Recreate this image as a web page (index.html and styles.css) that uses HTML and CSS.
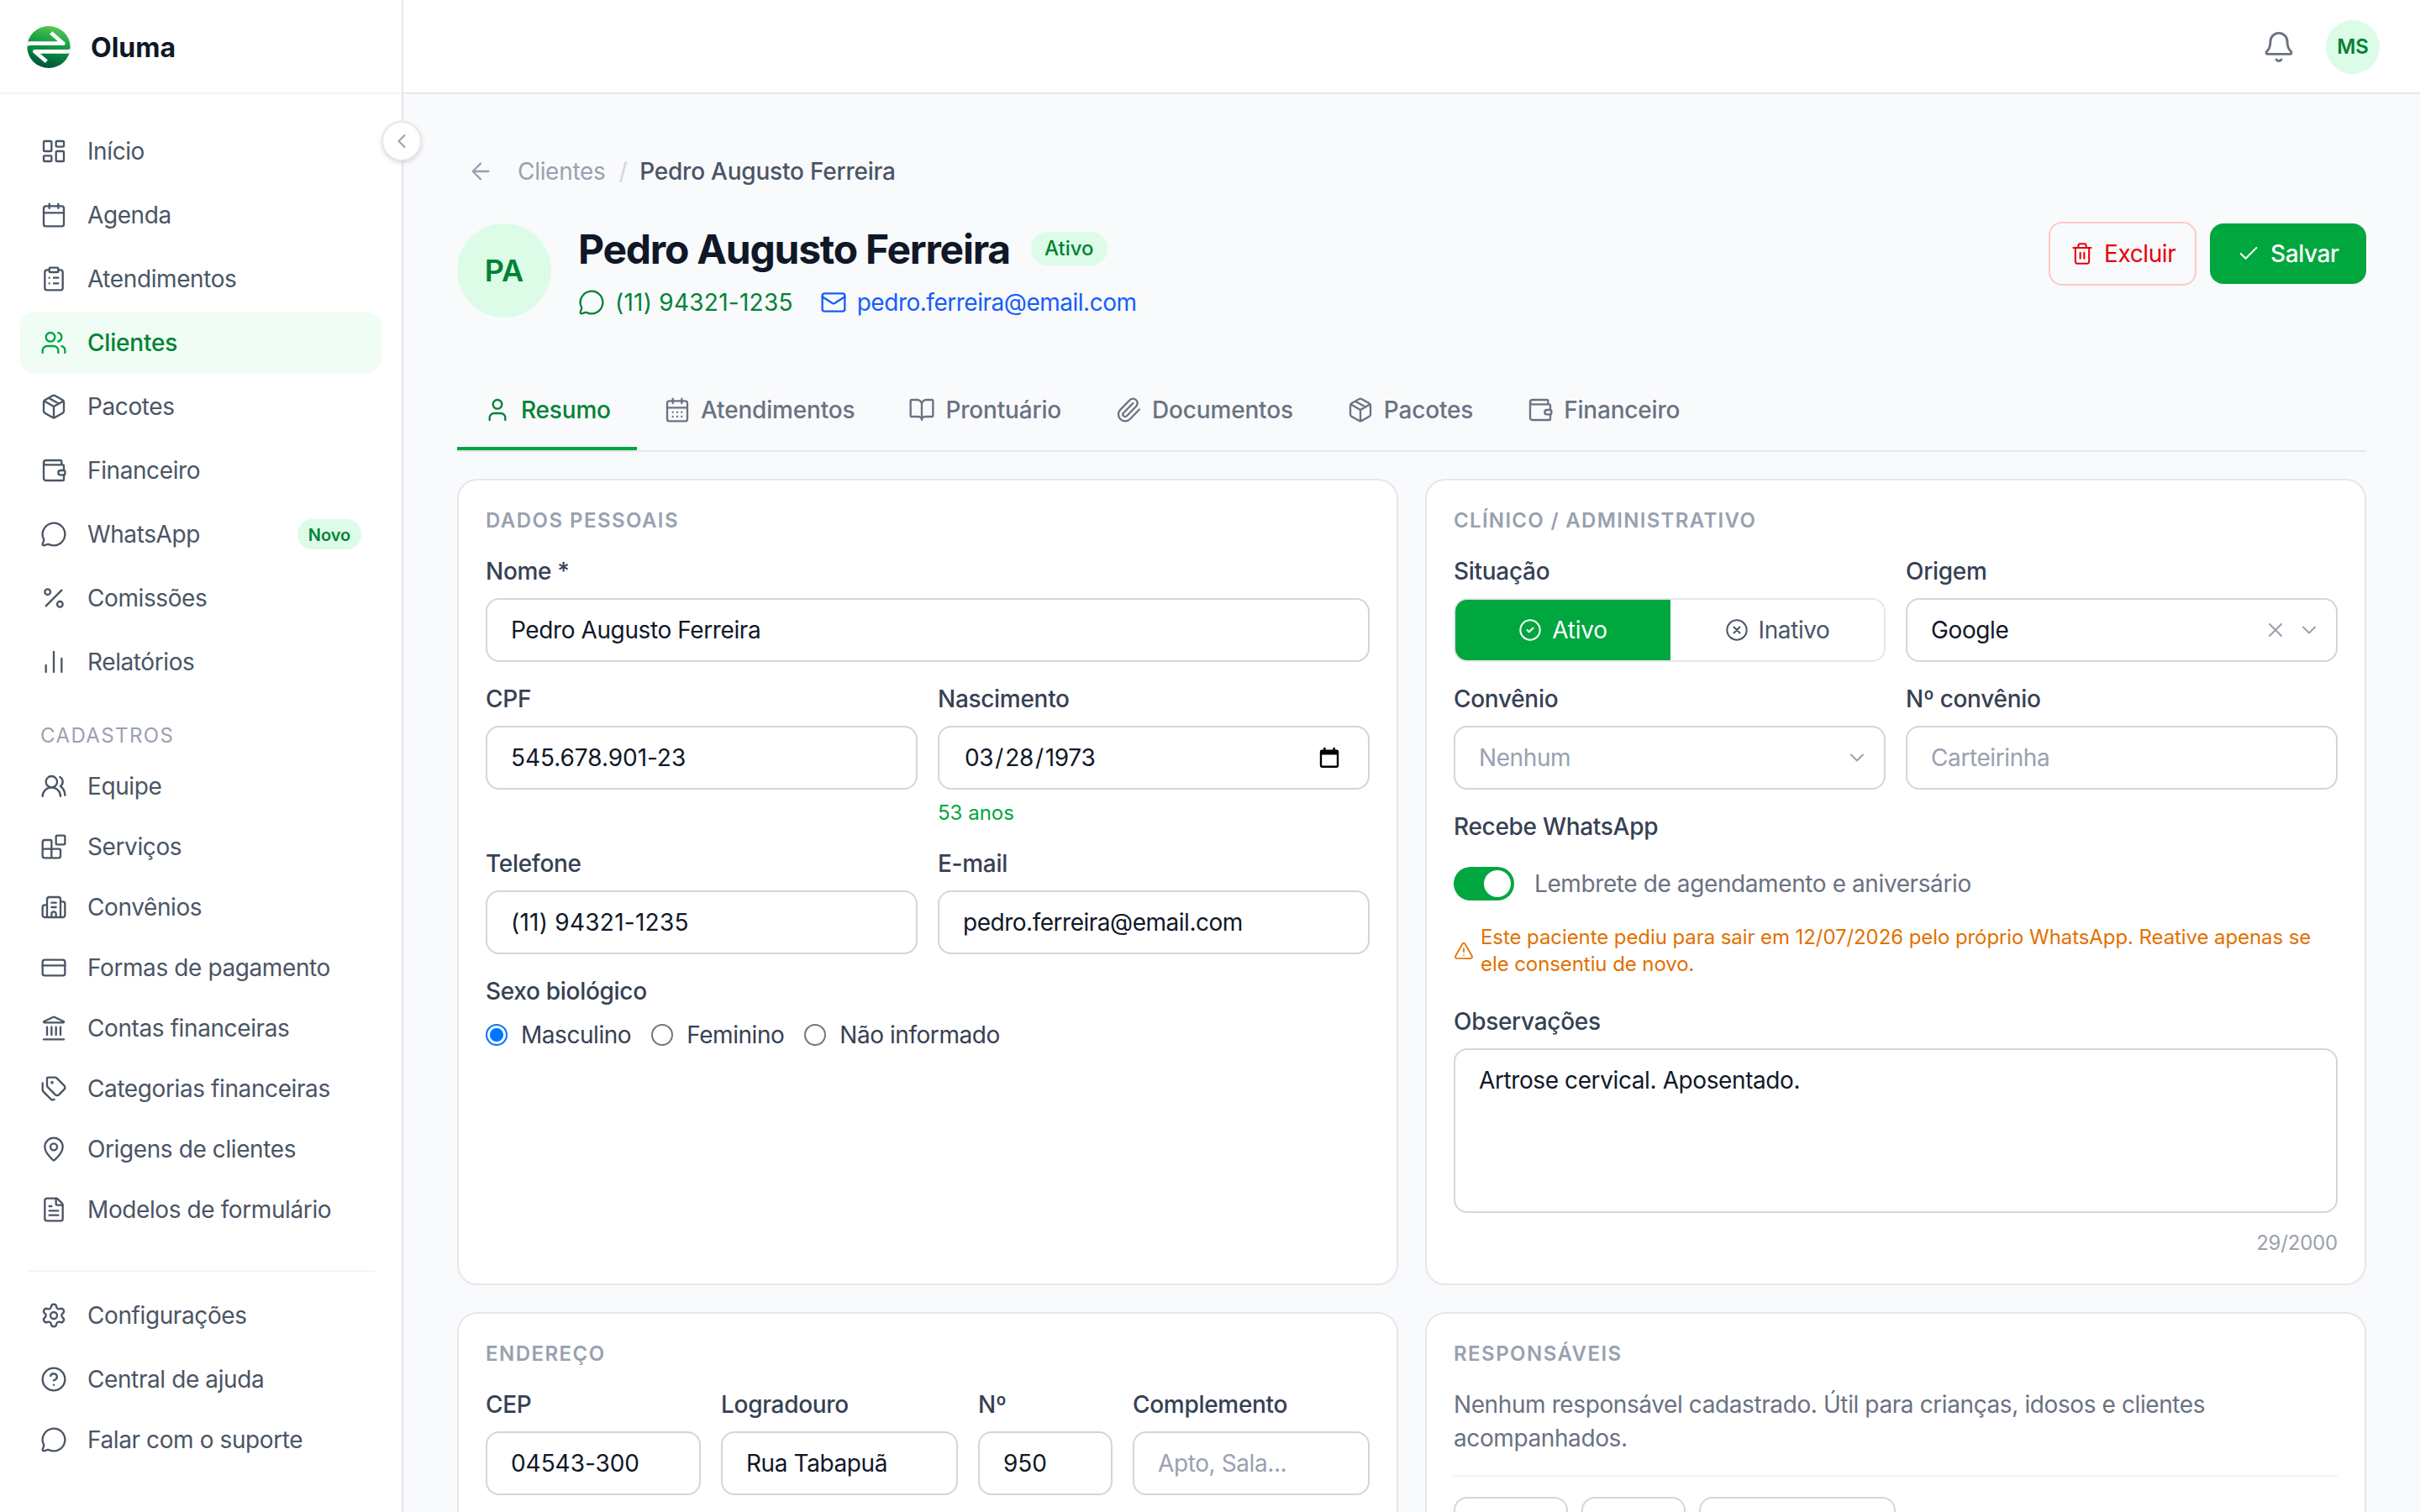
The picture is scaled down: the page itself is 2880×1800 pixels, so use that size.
FILE: index.html
```html
<!DOCTYPE html>
<html lang="pt-BR">
<head>
<meta charset="utf-8">
<title>Oluma</title>
<link rel="stylesheet" href="styles.css">
</head>
<body>
<svg class="sprite" aria-hidden="true">
  <symbol id="dashboard" viewBox="0 0 24 24"><rect width="7" height="9" x="3" y="3" rx="1"/><rect width="7" height="5" x="14" y="3" rx="1"/><rect width="7" height="9" x="14" y="12" rx="1"/><rect width="7" height="5" x="3" y="16" rx="1"/></symbol>
  <symbol id="calendar" viewBox="0 0 24 24"><path d="M8 2v4M16 2v4M3 10h18"/><rect width="18" height="18" x="3" y="4" rx="2"/></symbol>
  <symbol id="calendar-days" viewBox="0 0 24 24"><path d="M8 2v4M16 2v4M3 10h18M8 14h.01M12 14h.01M16 14h.01M8 18h.01M12 18h.01M16 18h.01"/><rect width="18" height="18" x="3" y="4" rx="2"/></symbol>
  <symbol id="clipboard" viewBox="0 0 24 24"><rect width="8" height="4" x="8" y="2" rx="1"/><path d="M16 4h2a2 2 0 0 1 2 2v14a2 2 0 0 1-2 2H6a2 2 0 0 1-2-2V6a2 2 0 0 1 2-2h2M12 11h4M12 16h4M8 11h.01M8 16h.01"/></symbol>
  <symbol id="users" viewBox="0 0 24 24"><path d="M16 21v-2a4 4 0 0 0-4-4H6a4 4 0 0 0-4 4v2M16 3.128a4 4 0 0 1 0 7.744M22 21v-2a4 4 0 0 0-3-3.87"/><circle cx="9" cy="7" r="4"/></symbol>
  <symbol id="package" viewBox="0 0 24 24"><path d="M11 21.73a2 2 0 0 0 2 0l7-4A2 2 0 0 0 21 16V8a2 2 0 0 0-1-1.73l-7-4a2 2 0 0 0-2 0l-7 4A2 2 0 0 0 3 8v8a2 2 0 0 0 1 1.73zM12 22V12M3.29 7 12 12l8.71-5M7.5 4.27l9 5.15"/></symbol>
  <symbol id="wallet" viewBox="0 0 24 24"><path d="M19 7V4a1 1 0 0 0-1-1H5a2 2 0 0 0 0 4h15a1 1 0 0 1 1 1v4h-3a2 2 0 0 0 0 4h3a1 1 0 0 0 1-1v-2a1 1 0 0 0-1-1"/><path d="M3 5v14a2 2 0 0 0 2 2h15a1 1 0 0 0 1-1v-4"/></symbol>
  <symbol id="message" viewBox="0 0 24 24"><path d="M2.992 16.342a2 2 0 0 1 .094 1.167l-1.065 3.29a1 1 0 0 0 1.236 1.168l3.413-.998a2 2 0 0 1 1.099.092 10 10 0 1 0-4.777-4.719"/></symbol>
  <symbol id="percent" viewBox="0 0 24 24"><path d="M19 5 5 19"/><circle cx="6.5" cy="6.5" r="2.5"/><circle cx="17.5" cy="17.5" r="2.5"/></symbol>
  <symbol id="chart" viewBox="0 0 24 24"><path d="M5 21v-6M12 21V3M19 21V9"/></symbol>
  <symbol id="team" viewBox="0 0 24 24"><path d="M18 21a8 8 0 0 0-16 0M22 20c0-3.37-2-6.5-4-8a5 5 0 0 0-.45-8.3"/><circle cx="10" cy="8" r="5"/></symbol>
  <symbol id="blocks" viewBox="0 0 24 24"><path d="M10 22V7a1 1 0 0 0-1-1H4a2 2 0 0 0-2 2v12a2 2 0 0 0 2 2h12a2 2 0 0 0 2-2v-5a1 1 0 0 0-1-1H2"/><rect x="14" y="2" width="8" height="8" rx="1"/></symbol>
  <symbol id="building" viewBox="0 0 24 24"><path d="M10 12h4M10 8h4M14 21v-3a2 2 0 0 0-4 0v3M6 10H4a2 2 0 0 0-2 2v7a2 2 0 0 0 2 2h16a2 2 0 0 0 2-2V9a2 2 0 0 0-2-2h-2M6 21V5a2 2 0 0 1 2-2h8a2 2 0 0 1 2 2v16"/></symbol>
  <symbol id="card-icon" viewBox="0 0 24 24"><rect width="20" height="14" x="2" y="5" rx="2"/><path d="M2 10h20"/></symbol>
  <symbol id="landmark" viewBox="0 0 24 24"><path d="M10 18v-7M11.119 2.205a2 2 0 0 1 1.762 0l7.84 3.846A.5.5 0 0 1 20.5 7h-17a.5.5 0 0 1-.22-.949zM14 18v-7M18 18v-7M3 22h18M6 18v-7"/></symbol>
  <symbol id="tags" viewBox="0 0 24 24"><path d="M13.172 2a2 2 0 0 1 1.414.586l6.71 6.71a2.4 2.4 0 0 1 0 3.408l-4.592 4.592a2.4 2.4 0 0 1-3.408 0l-6.71-6.71A2 2 0 0 1 6 9.172V3a1 1 0 0 1 1-1z"/><path d="M2 7v6.172a2 2 0 0 0 .586 1.414l6.71 6.71a2.4 2.4 0 0 0 3.191.193"/><circle cx="10.5" cy="6.5" r=".5" fill="currentColor"/></symbol>
  <symbol id="pin" viewBox="0 0 24 24"><path d="M20 10c0 4.993-5.539 10.193-7.399 11.799a1 1 0 0 1-1.202 0C9.539 20.193 4 14.993 4 10a8 8 0 0 1 16 0"/><circle cx="12" cy="10" r="3"/></symbol>
  <symbol id="file" viewBox="0 0 24 24"><path d="M6 22a2 2 0 0 1-2-2V4a2 2 0 0 1 2-2h8a2.4 2.4 0 0 1 1.704.706l3.588 3.588A2.4 2.4 0 0 1 20 8v12a2 2 0 0 1-2 2z"/><path d="M14 2v5a1 1 0 0 0 1 1h5M10 9H8M16 13H8M16 17H8"/></symbol>
  <symbol id="settings" viewBox="0 0 24 24"><path d="M9.671 4.136a2.34 2.34 0 0 1 4.659 0 2.34 2.34 0 0 0 3.319 1.915 2.34 2.34 0 0 1 2.33 4.033 2.34 2.34 0 0 0 0 3.831 2.34 2.34 0 0 1-2.33 4.033 2.34 2.34 0 0 0-3.319 1.915 2.34 2.34 0 0 1-4.659 0 2.34 2.34 0 0 0-3.32-1.915 2.34 2.34 0 0 1-2.33-4.033 2.34 2.34 0 0 0 0-3.831A2.34 2.34 0 0 1 6.35 6.051a2.34 2.34 0 0 0 3.319-1.915"/><circle cx="12" cy="12" r="3"/></symbol>
  <symbol id="help" viewBox="0 0 24 24"><circle cx="12" cy="12" r="10"/><path d="M9.09 9a3 3 0 0 1 5.83 1c0 2-3 3-3 3M12 17h.01"/></symbol>
  <symbol id="bell" viewBox="0 0 24 24"><path d="M10.268 21a2 2 0 0 0 3.464 0M3.262 15.326A1 1 0 0 0 4 17h16a1 1 0 0 0 .74-1.673C19.41 13.956 18 12.499 18 8A6 6 0 0 0 6 8c0 4.499-1.411 5.956-2.738 7.326"/></symbol>
  <symbol id="user" viewBox="0 0 24 24"><path d="M19 21v-2a4 4 0 0 0-4-4H9a4 4 0 0 0-4 4v2"/><circle cx="12" cy="7" r="4"/></symbol>
  <symbol id="book" viewBox="0 0 24 24"><path d="M12 7v14M3 18a1 1 0 0 1-1-1V4a1 1 0 0 1 1-1h5a4 4 0 0 1 4 4 4 4 0 0 1 4-4h5a1 1 0 0 1 1 1v13a1 1 0 0 1-1 1h-6a3 3 0 0 0-3 3 3 3 0 0 0-3-3z"/></symbol>
  <symbol id="clip" viewBox="0 0 24 24"><path d="m16 6-8.414 8.586a2 2 0 0 0 2.829 2.829l8.414-8.586a4 4 0 1 0-5.657-5.657l-8.379 8.551a6 6 0 1 0 8.485 8.485l8.379-8.551"/></symbol>
  <symbol id="mail" viewBox="0 0 24 24"><path d="m22 7-8.991 5.727a2 2 0 0 1-2.009 0L2 7"/><rect x="2" y="4" width="20" height="16" rx="2"/></symbol>
  <symbol id="trash" viewBox="0 0 24 24"><path d="M10 11v6M14 11v6M19 6v14a2 2 0 0 1-2 2H7a2 2 0 0 1-2-2V6M3 6h18M8 6V4a2 2 0 0 1 2-2h4a2 2 0 0 1 2 2v2"/></symbol>
  <symbol id="check" viewBox="0 0 24 24"><path d="M20 6 9 17l-5-5"/></symbol>
  <symbol id="circle-check" viewBox="0 0 24 24"><circle cx="12" cy="12" r="10"/><path d="m9 12 2 2 4-4"/></symbol>
  <symbol id="circle-x" viewBox="0 0 24 24"><circle cx="12" cy="12" r="10"/><path d="m15 9-6 6M9 9l6 6"/></symbol>
  <symbol id="x" viewBox="0 0 24 24"><path d="M18 6 6 18M6 6l12 12"/></symbol>
  <symbol id="chevron-down" viewBox="0 0 24 24"><path d="m6 9 6 6 6-6"/></symbol>
  <symbol id="chevron-left" viewBox="0 0 24 24"><path d="m15 18-6-6 6-6"/></symbol>
  <symbol id="arrow-left" viewBox="0 0 24 24"><path d="m12 19-7-7 7-7M19 12H5"/></symbol>
  <symbol id="alert" viewBox="0 0 24 24"><path d="m21.73 18-8-14a2 2 0 0 0-3.48 0l-8 14A2 2 0 0 0 4 21h16a2 2 0 0 0 1.73-3M12 9v4M12 17h.01"/></symbol>
</svg>

<div class="app">
  <aside class="sidebar">
    <div class="brand">
      <svg class="logo" viewBox="0 0 168 168">
        <defs>
          <linearGradient id="lg" x1="0.65" y1="0" x2="0.4" y2="1">
            <stop offset="0" stop-color="#63cc55"/><stop offset=".35" stop-color="#1fa548"/><stop offset=".6" stop-color="#0b8a43"/><stop offset="1" stop-color="#004f38"/>
          </linearGradient>
          <clipPath id="lc"><ellipse cx="78" cy="78" rx="77" ry="75"/></clipPath>
        </defs>
        <g clip-path="url(#lc)">
          <rect width="168" height="156" fill="url(#lg)"/>
          <g fill="none" stroke="#fff" stroke-width="14" stroke-linejoin="round">
            <path d="M-8 75q8-10 20-10H130L86 27"/>
            <path d="M164 84q-8 10-20 10H28L70 130"/>
          </g>
        </g>
      </svg>
      <span>Oluma</span>
    </div>
    <button class="collapse"><svg class="icon i28"><use href="#chevron-left"/></svg></button>
    <nav class="nav">
      <a class="item"><svg class="icon"><use href="#dashboard"/></svg>Início</a>
      <a class="item"><svg class="icon"><use href="#calendar"/></svg>Agenda</a>
      <a class="item"><svg class="icon"><use href="#clipboard"/></svg>Atendimentos</a>
      <a class="item active"><svg class="icon"><use href="#users"/></svg>Clientes</a>
      <a class="item"><svg class="icon"><use href="#package"/></svg>Pacotes</a>
      <a class="item"><svg class="icon"><use href="#wallet"/></svg>Financeiro</a>
      <a class="item"><svg class="icon"><use href="#message"/></svg>WhatsApp<span class="new">Novo</span></a>
      <a class="item"><svg class="icon"><use href="#percent"/></svg>Comissões</a>
      <a class="item"><svg class="icon"><use href="#chart"/></svg>Relatórios</a>
    </nav>
    <div class="nav-title">CADASTROS</div>
    <nav class="nav dense">
      <a class="item"><svg class="icon"><use href="#team"/></svg>Equipe</a>
      <a class="item"><svg class="icon"><use href="#blocks"/></svg>Serviços</a>
      <a class="item"><svg class="icon"><use href="#building"/></svg>Convênios</a>
      <a class="item"><svg class="icon"><use href="#card-icon"/></svg>Formas de pagamento</a>
      <a class="item"><svg class="icon"><use href="#landmark"/></svg>Contas financeiras</a>
      <a class="item"><svg class="icon"><use href="#tags"/></svg>Categorias financeiras</a>
      <a class="item"><svg class="icon"><use href="#pin"/></svg>Origens de clientes</a>
      <a class="item"><svg class="icon"><use href="#file"/></svg>Modelos de formulário</a>
    </nav>
    <div class="nav-rule"></div>
    <nav class="nav dense">
      <a class="item settings"><svg class="icon"><use href="#settings"/></svg>Configurações</a>
      <a class="item"><svg class="icon"><use href="#help"/></svg>Central de ajuda</a>
      <a class="item"><svg class="icon"><use href="#message"/></svg>Falar com o suporte</a>
    </nav>
  </aside>

  <div class="main">
    <header class="topbar">
      <svg class="icon i40"><use href="#bell"/></svg>
      <span class="me">MS</span>
    </header>

    <main class="content">
      <div class="crumbs">
        <svg class="icon"><use href="#arrow-left"/></svg>
        <span class="crumb">Clientes</span><span class="sep">/</span><span class="here">Pedro Augusto Ferreira</span>
      </div>

      <div class="profile">
        <div class="avatar">PA</div>
        <div class="who">
          <div class="name-row"><h1>Pedro Augusto Ferreira</h1><span class="status">Ativo</span></div>
          <div class="contacts">
            <a class="phone"><svg class="icon"><use href="#message"/></svg>(11) 94321-1235</a>
            <a class="mail"><svg class="icon"><use href="#mail"/></svg>pedro.ferreira@email.com</a>
          </div>
        </div>
        <div class="actions">
          <button class="btn danger"><svg class="icon i28"><use href="#trash"/></svg>Excluir</button>
          <button class="btn primary"><svg class="icon i28"><use href="#check"/></svg>Salvar</button>
        </div>
      </div>

      <div class="tabs">
        <a class="tab on"><svg class="icon"><use href="#user"/></svg>Resumo</a>
        <a class="tab"><svg class="icon"><use href="#calendar-days"/></svg>Atendimentos</a>
        <a class="tab"><svg class="icon"><use href="#book"/></svg>Prontuário</a>
        <a class="tab"><svg class="icon"><use href="#clip"/></svg>Documentos</a>
        <a class="tab"><svg class="icon"><use href="#package"/></svg>Pacotes</a>
        <a class="tab"><svg class="icon"><use href="#wallet"/></svg>Financeiro</a>
      </div>

      <div class="cards">
        <section class="card">
          <h2>DADOS PESSOAIS</h2>
          <div class="grid two">
            <div class="field wide"><label>Nome *</label><input class="input" value="Pedro Augusto Ferreira"></div>
            <div class="field"><label>CPF</label><input class="input num" value="545.678.901-23"></div>
            <div class="field"><label>Nascimento</label>
              <div class="input date"><span class="parts"><span>03</span>/<span>28</span>/<span>1973</span></span>
                <svg class="picker" viewBox="0 0 24 26"><path fill="#000" fill-rule="evenodd" d="M5 1h2.600v2.400h8.800V1H19v2.400h1.800a2.400 2.400 0 0 1 2.400 2.400v16.800a2.400 2.400 0 0 1-2.400 2.400H3.200a2.400 2.400 0 0 1-2.400-2.400V5.800a2.400 2.400 0 0 1 2.400-2.400H5zM3.200 9.400v13.200h17.600V9.400z"/></svg>
              </div>
              <span class="hint">53 anos</span></div>
            <div class="field"><label>Telefone</label><input class="input tel" value="(11) 94321-1235"></div>
            <div class="field"><label>E-mail</label><input class="input email" value="pedro.ferreira@email.com"></div>
            <div class="field wide"><label>Sexo biológico</label>
              <div class="radios">
                <span class="choice"><i class="radio checked"></i>Masculino</span>
                <span class="choice"><i class="radio"></i>Feminino</span>
                <span class="choice"><i class="radio"></i>Não informado</span>
              </div></div>
          </div>
        </section>

        <section class="card">
          <h2 class="clinical">CLÍNICO / ADMINISTRATIVO</h2>
          <div class="grid two">
            <div class="field"><label>Situação</label>
              <div class="segmented">
                <span class="seg on"><svg class="icon i28"><use href="#circle-check"/></svg>Ativo</span>
                <span class="seg"><svg class="icon i28"><use href="#circle-x"/></svg>Inativo</span>
              </div></div>
            <div class="field"><label>Origem</label>
              <div class="input select"><span>Google</span><svg class="icon i28"><use href="#x"/></svg><svg class="icon i28"><use href="#chevron-down"/></svg></div></div>
            <div class="field"><label>Convênio</label>
              <div class="input select empty"><span>Nenhum</span><svg class="icon i28"><use href="#chevron-down"/></svg></div></div>
            <div class="field"><label>Nº convênio</label><input class="input" placeholder="Carteirinha"></div>
            <div class="field wide"><label>Recebe WhatsApp</label>
              <div class="switch-row"><i class="switch"></i>Lembrete de agendamento e aniversário</div>
              <div class="warning"><svg class="icon i24"><use href="#alert"/></svg><p>Este paciente pediu para sair em 12/07/2026 pelo próprio WhatsApp. Reative apenas se ele consentiu de novo.</p></div></div>
            <div class="field wide notes"><label>Observações</label>
              <textarea class="input area">Artrose cervical. Aposentado.</textarea>
              <span class="count">29/2000</span></div>
          </div>
        </section>

        <section class="card">
          <h2>ENDEREÇO</h2>
          <div class="grid address">
            <div class="field"><label>CEP</label><input class="input num" value="04543-300"></div>
            <div class="field"><label>Logradouro</label><input class="input" value="Rua Tabapuã"></div>
            <div class="field"><label>Nº</label><input class="input num" value="950"></div>
            <div class="field"><label>Complemento</label><input class="input" placeholder="Apto, Sala..."></div>
          </div>
        </section>

        <section class="card">
          <h2>RESPONSÁVEIS</h2>
          <p class="empty-text">Nenhum responsável cadastrado. Útil para crianças, idosos e clientes acompanhados.</p>
          <div class="add-row"><input class="input a"><input class="input b"><input class="input c"></div>
        </section>
      </div>
    </main>
  </div>
</div>
</body>
</html>
```
FILE: styles.css
```css
* { box-sizing: border-box; margin: 0; padding: 0; }

body {
  width: 2880px;
  height: 1800px;
  overflow: hidden;
  background: #f9fafc;
  color: #101828;
  font-family: Inter, "Liberation Sans", sans-serif;
  font-size: 28px;
  line-height: 40px;
  letter-spacing: -0.4px;
}

button, input, textarea { font: inherit; letter-spacing: inherit; color: inherit; }

.sprite { display: none; }

.icon {
  width: 32px;
  height: 32px;
  flex: none;
  fill: none;
  stroke: currentColor;
  stroke-width: 1.75;
  stroke-linecap: round;
  stroke-linejoin: round;
}
.i24 { width: 24px; height: 24px; }
.i28 { width: 28px; height: 28px; }
.i40 { width: 40px; height: 40px; }

.app { display: flex; height: 1800px; overflow: hidden; }

/* Sidebar */
.sidebar {
  position: relative;
  width: 480px;
  flex: none;
  background: #fff;
  border-right: 2px solid #e5e7eb;
}
.brand {
  display: flex;
  align-items: center;
  gap: 20px;
  height: 112px;
  padding: 2px 32px 0;
  border-bottom: 2px solid #f3f4f6;
  font-size: 32px;
  font-weight: 700;
  letter-spacing: 0;
}
.brand span { padding-top: 2px; }
.logo { width: 56px; height: 56px; margin-top: 4px; }
.collapse {
  position: absolute;
  top: 144px;
  right: -24px;
  display: flex;
  align-items: center;
  justify-content: center;
  width: 48px;
  height: 48px;
  border: 2px solid #e5e7eb;
  border-radius: 50%;
  background: #fff;
  color: #99a1af;
  box-shadow: 0 2px 6px rgba(0, 0, 0, .1), 0 2px 4px -2px rgba(0, 0, 0, .1);
}
.nav { display: flex; flex-direction: column; gap: 4px; padding: 32px 24px 0; }
.nav.dense { gap: 0; padding-top: 0; }
.item {
  display: flex;
  align-items: center;
  gap: 24px;
  height: 72px;
  padding: 0 24px;
  border-radius: 16px;
  color: #4a5565;
}
.item.active { background: #f0fdf4; color: #008236; font-weight: 500; letter-spacing: -0.2px; }
.item.active .icon { color: #00a63e; }
.item.settings { margin-bottom: 4px; }
.new {
  width: 76px;
  height: 36px;
  margin-left: auto;
  border-radius: 18px;
  background: #dcfce7;
  color: #008236;
  font-size: 20px;
  font-weight: 600;
  line-height: 38px;
  letter-spacing: 0;
  text-align: center;
}
.nav-title {
  padding: 36px 48px 8px;
  color: #99a1af;
  font-size: 24px;
  line-height: 32px;
  letter-spacing: 1.4px;
}
.nav-rule { height: 2px; margin: 36px 32px 16px; background: #f3f4f6; }

/* Top bar */
.main { flex: 1; min-width: 0; }
.topbar {
  display: flex;
  align-items: center;
  justify-content: flex-end;
  gap: 36px;
  height: 112px;
  padding: 2px 48px 0 0;
  border-bottom: 2px solid #e5e7eb;
  background: #fff;
  color: #6a7282;
}
.me {
  width: 64px;
  height: 64px;
  border-radius: 50%;
  background: #dcfce7;
  color: #008236;
  font-size: 24px;
  font-weight: 600;
  line-height: 64px;
  letter-spacing: 0;
  text-align: center;
}

.content { padding: 64px 64px 0; }

.crumbs { display: flex; align-items: center; height: 56px; padding-left: 12px; color: #99a1af; }
.crumb { margin-left: 28px; letter-spacing: -0.3px; }
.sep { margin: 0 16px; color: #d1d5dc; }
.here { margin-left: -1px; color: #4a5565; font-weight: 500; letter-spacing: -0.22px; }

/* Profile header */
.profile { display: flex; align-items: flex-start; height: 176px; margin-top: 32px; }
.avatar {
  width: 112px;
  height: 112px;
  margin: 2px 32px 0 0;
  border-radius: 50%;
  background: #dcfce7;
  color: #008236;
  font-size: 36px;
  font-weight: 600;
  line-height: 112px;
  letter-spacing: 0;
  text-align: center;
}
.name-row { display: flex; align-items: center; gap: 25px; height: 66px; margin-bottom: 10px; }
h1 { font-size: 48px; font-weight: 700; line-height: 64px; letter-spacing: -1.25px; }
.status {
  height: 40px;
  margin-top: -2px;
  padding: 0 16px;
  border-radius: 20px;
  background: #dcfce7;
  color: #008236;
  font-size: 24px;
  font-weight: 500;
  line-height: 40px;
  letter-spacing: 0;
}
.contacts { display: flex; gap: 32px; }
.contacts a { display: flex; align-items: center; gap: 12px; }
.phone { color: #008236; letter-spacing: 0.25px; }
.mail { color: #155dfc; letter-spacing: -0.48px; }
.email { letter-spacing: -0.48px; }
.actions { display: flex; align-items: center; gap: 16px; margin-left: auto; }
.btn {
  display: flex;
  align-items: center;
  gap: 12px;
  border: 0;
  border-radius: 16px;
}
.danger { width: 176px; height: 76px; padding: 0 24px; border: 2px solid #ffc9c9; background: transparent; color: #e7000b; }
.primary { width: 186px; height: 72px; padding: 0 32px; background: #00a63e; color: #fff; font-weight: 500; }

/* Tabs */
.tabs { display: flex; height: 98px; border-bottom: 2px solid #e5e7eb; }
.tab {
  display: flex;
  align-items: center;
  gap: 12px;
  height: 96px;
  padding: 0 32px;
  color: #6a7282;
  font-weight: 500;
  letter-spacing: -0.18px;
}
.tab.on { width: 214px; color: #008236; box-shadow: inset 0 -4px #00a63e; }

/* Cards */
.cards { display: grid; grid-template-columns: 1fr 1fr; gap: 32px; margin-top: 32px; }
.card {
  padding: 32px;
  min-height: 300px;
  border: 2px solid #e5e7eb;
  border-radius: 24px;
  background: #fff;
}
h2 {
  margin-bottom: 24px;
  color: #99a1af;
  font-size: 24px;
  font-weight: 600;
  line-height: 32px;
  letter-spacing: 1.45px;
}
.clinical { letter-spacing: 1.32px; }
.grid { display: grid; gap: 24px; }
.two { grid-template-columns: 1fr 1fr; }
.address { grid-template-columns: 256px 282px 160px 282px; }
.wide { grid-column: 1 / -1; }
.field { display: flex; flex-direction: column; gap: 12px; min-width: 0; }
label { color: #364153; font-weight: 500; letter-spacing: -0.3px; }
.input {
  width: 100%;
  height: 76px;
  padding: 0 28px;
  border: 2px solid #d1d5dc;
  border-radius: 16px;
  background: #fff;
  outline: none;
}
.input::placeholder { color: #99a1af; opacity: 1; }
.num { letter-spacing: -0.05px; }
.tel { letter-spacing: 0.25px; }
.date, .select { display: flex; align-items: center; }
.parts { flex: 1; letter-spacing: -0.3px; }
.parts span { padding: 0 2px; }
.picker { width: 24px; height: 26px; margin-right: 6px; }
.hint { color: #00a63e; font-size: 24px; line-height: 32px; letter-spacing: 0; }
.radios { display: flex; gap: 24px; }
.choice { display: flex; align-items: center; gap: 16px; color: #364153; letter-spacing: -0.45px; }
.radio { width: 26px; height: 26px; border: 2px solid #767676; border-radius: 50%; }
.checked { border-color: #0075ff; background: radial-gradient(circle, #0075ff 7.5px, #fff 8.5px); }

.segmented {
  display: flex;
  height: 76px;
  border: 2px solid #e5e7eb;
  border-radius: 16px;
  overflow: hidden;
}
.seg { display: flex; flex: 1; align-items: center; justify-content: center; gap: 12px; color: #4a5565; }
.seg.on { flex: 0 0 256px; background: #00a63e; color: #fff; letter-spacing: -0.2px; }
.select { gap: 12px; padding-right: 18px; }
.select span { flex: 1; }
.select .icon { color: #99a1af; }
.empty { color: #99a1af; }

.switch-row { display: flex; align-items: center; gap: 24px; height: 72px; color: #6a7282; }
.switch {
  width: 72px;
  height: 40px;
  border-radius: 20px;
  background: radial-gradient(circle at 52px 20px, #fff 15.5px, #00a63e 16.5px);
}
.warning {
  display: flex;
  align-items: center;
  gap: 8px;
  color: #e17100;
  font-size: 24px;
  line-height: 32px;
  letter-spacing: -0.08px;
}
.notes { margin-top: 8px; }
.area { display: block; height: 196px; padding: 16px 28px; resize: none; }
.count { margin-top: 8px; color: #99a1af; font-size: 24px; line-height: 32px; letter-spacing: -0.2px; text-align: right; }

.empty-text { color: #6a7282; letter-spacing: -0.4px; }
.add-row { display: flex; gap: 16px; margin-top: 24px; padding-top: 24px; border-top: 2px solid #f3f4f6; }
.a { width: 136px; }
.b { width: 124px; }
.c { width: 234px; }
```
